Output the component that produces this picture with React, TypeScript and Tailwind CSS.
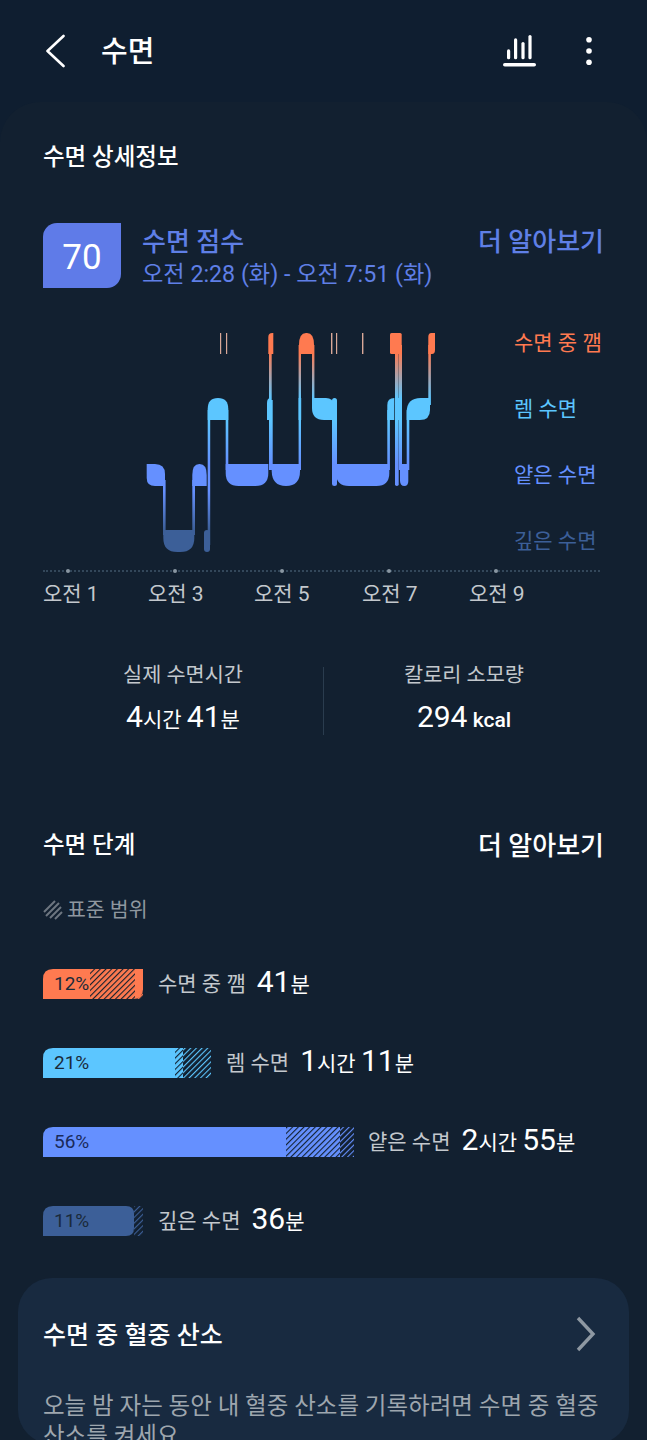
import type { ReactNode } from "react";

const FONT = "font-['Roboto','Noto_Sans_CJK_KR',sans-serif]";

// one hatch pattern per bar colour
function Hatch({ id, stroke }: { id: string; stroke: string }) {
  return (
    <pattern id={id} width="4" height="4" patternUnits="userSpaceOnUse" patternTransform="rotate(45)">
      <rect x="0" y="0" width="1.1" height="4" fill={stroke} />
    </pattern>
  );
}

function StageBar({
  width,
  color,
  hatchStart,
  hatchSolidEnd,
  id,
  label,
  labelColor,
  rounded,
}: {
  width: number;
  color: string;
  hatchStart: number;
  hatchSolidEnd: number;
  id: string;
  label: string;
  labelColor: string;
  rounded: string;
}) {
  return (
    <div className="relative h-[30px] shrink-0" style={{ width }}>
      <svg width={width} height={30} className="absolute inset-0">
        <defs>
          <Hatch id={id} stroke="#12202f" />
          <Hatch id={id + "-o"} stroke={color} />
        </defs>
        <path d={rounded} fill={color} />
        <rect x={hatchStart} y={0} width={hatchSolidEnd - hatchStart} height={30} fill={`url(#${id})`} />
        {hatchSolidEnd < width && (
          <rect x={hatchSolidEnd} y={0} width={width - hatchSolidEnd} height={30} fill={`url(#${id}-o)`} />
        )}
      </svg>
      <span className={`absolute left-[11px] top-[4px] text-[19px] leading-[22px] ${labelColor}`}>{label}</span>
    </div>
  );
}

function StageRow({ bar, name, children, nameGap }: { bar: ReactNode; name: string; children: ReactNode; nameGap: string }) {
  return (
    <div className="flex items-center h-[30px]">
      {bar}
      <span className={`pt-[1px] text-[21px] text-[#c3c8cd] whitespace-nowrap ${nameGap}`}>{name}</span>
      <span className="ml-[11px] text-white text-[21px] whitespace-nowrap">{children}</span>
    </div>
  );
}

function Big({ children }: { children: ReactNode }) {
  return <span className="text-[30px] leading-none">{children}</span>;
}

const ORANGE = "#ff7a50";
const SKY = "#5cc6ff";
const BLUE = "#6590ff";
const DEEP = "#3c5f98";

function SleepChart() {
  return (
    <svg width="310" height="240" viewBox="130 320 310 240" className="block">
      <defs>
        <linearGradient id="tr" gradientUnits="userSpaceOnUse" x1="0" y1="333" x2="0" y2="552">
          <stop offset="0.09" stopColor={ORANGE} />
          <stop offset="0.3" stopColor={SKY} />
          <stop offset="0.4" stopColor={SKY} />
          <stop offset="0.6" stopColor={BLUE} />
          <stop offset="0.72" stopColor={BLUE} />
          <stop offset="0.9" stopColor={DEEP} />
        </linearGradient>
      </defs>

      {/* transitions */}
      <g fill="url(#tr)">
        <rect x="163" y="480" width="2.6" height="55" />
        <rect x="192.3" y="480" width="2.7" height="55" />
        <rect x="207.7" y="410" width="2.5" height="135" />
        <rect x="225.7" y="410" width="2.6" height="60" />
        <rect x="269" y="345" width="2.7" height="125" />
        <rect x="270.7" y="400" width="2" height="70" />
        <rect x="298.6" y="345" width="2.4" height="125" />
        <rect x="312" y="345" width="2.4" height="60" />
        <rect x="332" y="398" width="5" height="88" rx="2.5" />
        <rect x="387.3" y="410" width="2.6" height="60" />
        <rect x="395" y="345" width="3.7" height="141" rx="1.8" />
        <rect x="399" y="345" width="3" height="125" />
        <rect x="406.7" y="410" width="2.6" height="60" />
        <rect x="428.3" y="345" width="2.6" height="60" />
      </g>

      {/* awake */}
      <g fill={ORANGE}>
        <path d="M268.3 354V337q0-4 4-4h1v21z" />
        <path d="M299 354V345q0-12 7-12h1q7 0 7 12v9z" />
        <rect x="390" y="333" width="11.7" height="21" rx="1.5" />
        <path d="M428.3 354V337q0-4 3-4h3.7v17q0 4-3 4z" />
      </g>
      <g fill="#d9a898">
        <rect x="220" y="333" width="1.2" height="21" />
        <rect x="226" y="333" width="1.2" height="21" />
        <rect x="331" y="333" width="1.4" height="21" />
        <rect x="336" y="333" width="1.2" height="21" />
        <rect x="362" y="333" width="1.4" height="21" />
      </g>

      {/* rem */}
      <g fill={SKY}>
        <path d="M207.7 420V409q0-11 10.3-11t10.3 11v11z" />
        <path d="M267 420v-17q0-5 3.7-5v22z" />
        <rect x="298.6" y="398" width="2.6" height="22" />
        <path d="M312 398h14q7 0 8 7v15h-10q-12 0-12-12z" />
        <path d="M387.3 420v-15q0-7 7-7v22z" />
        <rect x="395" y="398" width="7" height="22" />
        <path d="M406.7 420v-8q0-14 14-14h9.3v12q0 10-10 10z" />
      </g>

      {/* light */}
      <g fill={BLUE}>
        <path d="M146.7 464h8.3q10 0 10 10v12h-10q-8.3 0-8.3-8z" />
        <path d="M192.3 486V475q0-11 7-11h.4q7 0 7 11v11z" />
        <path d="M225.7 464h42.6v9q0 13-13 13h-16.6q-13 0-13-13z" />
        <path d="M271.7 464h28.3v7q0 15-14 15t-14.3-15z" />
        <path d="M336 464h53.3v9q0 13-13 13h-27.3q-13 0-13-13z" />
        <path d="M400 464h8.3v17q0 5-4 5t-4.3-5z" />
      </g>

      {/* deep */}
      <g fill={DEEP}>
        <path d="M163.3 530h31v8q0 14-14 14h-3q-14 0-14-14z" />
        <rect x="204" y="530" width="6" height="22" rx="3" />
      </g>
    </svg>
  );
}

export default function App() {
  return (
    <div className={`relative w-[647px] h-[1440px] overflow-hidden bg-[#0f1e30] ${FONT}`}>
      {/* header */}
      <header className="h-[102px] flex items-center pl-[46px] pr-[54px]">
        <svg width="20" height="34" viewBox="0 0 20 34" fill="none" stroke="#ffffff" strokeWidth="2.6" strokeLinecap="round" strokeLinejoin="round">
          <path d="M17.5 2 1.5 17l16 15" />
        </svg>
        <h1 className="ml-[35px] pt-[3px] text-[29px] font-medium text-white leading-none">수면</h1>
        <div className="ml-auto flex items-center gap-[48px]">
          <svg width="34" height="34" viewBox="0 0 34 34" fill="#ffffff">
            <rect x="4" y="15.3" width="3.2" height="10" rx="1.6" />
            <rect x="11" y="4.3" width="3.2" height="21" rx="1.6" />
            <rect x="18.4" y="8" width="3.2" height="17.3" rx="1.6" />
            <rect x="25.4" y="1" width="3.2" height="24.3" rx="1.6" />
            <rect x="0" y="29" width="33" height="3.6" rx="1.8" />
          </svg>
          <svg width="8" height="32" viewBox="0 0 8 32" fill="#ffffff">
            <circle cx="4" cy="4.8" r="2.8" />
            <circle cx="4" cy="16" r="2.8" />
            <circle cx="4" cy="27.2" r="2.8" />
          </svg>
        </div>
      </header>

      {/* main panel */}
      <main className="bg-[#122030] rounded-t-[40px] h-[1338px]">
        <h2 className="pl-[43px] pt-[41px] text-[23.5px] leading-[28px] font-medium text-white">수면 상세정보</h2>

        <section className="flex mt-[52px] pl-[43px] pr-[43px]">
          <div className="w-[78px] h-[65px] pt-[6px] bg-[#5f7be8] rounded-tl-[14px] rounded-br-[14px] flex items-center justify-center text-white text-[35px]">
            70
          </div>
          <div className="ml-[21px] pt-[3px]">
            <div className="text-[26px] leading-[32px] font-medium text-[#5f7fe6]">수면 점수</div>
            <div className="text-[23.2px] leading-[32px] text-[#5f7fe6] whitespace-nowrap">오전 2:28 (화) - 오전 7:51 (화)</div>
          </div>
          <div className="ml-auto pt-[3px] text-[26px] leading-[32px] font-medium text-[#5f7fe6]">더 알아보기</div>
        </section>

        {/* chart */}
        <section className="relative h-[272px] mt-[30px]">
          <div className="absolute left-[130px] top-0">
            <SleepChart />
          </div>
          <div className="absolute left-[514px] top-[8px] flex flex-col gap-[36px] text-[21px] leading-[30px] whitespace-nowrap">
            <span className="text-[#ff7a50]">수면 중 깸</span>
            <span className="text-[#5cc6ff]">렘 수면</span>
            <span className="text-[#6590ff]">얕은 수면</span>
            <span className="text-[#3c5f98]">깊은 수면</span>
          </div>
          <div className="absolute left-[43px] right-[47px] top-[250px] border-t-2 border-dotted border-[#33475a]" />
          <div className="absolute left-[66px] top-[249px] flex gap-[103px]">
            <span className="size-1 rounded-full bg-[#8a96a2]" />
            <span className="size-1 rounded-full bg-[#8a96a2]" />
            <span className="size-1 rounded-full bg-[#8a96a2]" />
            <span className="size-1 rounded-full bg-[#8a96a2]" />
            <span className="size-1 rounded-full bg-[#8a96a2]" />
          </div>
          <div className="absolute left-[43px] top-[259px] text-[21px] leading-[30px] text-[#c3c8cd] flex whitespace-nowrap">
            <span className="w-[105px]">오전 1</span>
            <span className="w-[106px]">오전 3</span>
            <span className="w-[108px]">오전 5</span>
            <span className="w-[107px]">오전 7</span>
            <span>오전 9</span>
          </div>
        </section>

        {/* totals */}
        <section className="flex mt-[75px] h-[68px] px-[43px]">
          <div className="w-[280px] text-center">
            <div className="-mt-[5px] text-[20.8px] leading-[26px] text-[#c3c8cd]">실제 수면시간</div>
            <div className="mt-[13px] text-white text-[21px] leading-[38px]">
              <Big>4</Big>시간 <Big>41</Big>분
            </div>
          </div>
          <div className="w-px bg-[#2a3c4e]" />
          <div className="flex-1 text-center">
            <div className="-mt-[5px] text-[20.8px] leading-[26px] text-[#c3c8cd]">칼로리 소모량</div>
            <div className="mt-[13px] text-white text-[21px] leading-[38px]">
              <Big>294</Big> <span className="font-medium">kcal</span>
            </div>
          </div>
        </section>

        {/* stages */}
        <section className="mt-[95px] px-[43px]">
          <div className="flex items-center justify-between h-[32px]">
            <h2 className="text-[23.5px] font-medium text-white">수면 단계</h2>
            <span className="text-[26px] font-medium text-white">더 알아보기</span>
          </div>
          <div className="flex items-center mt-[33px] h-[30px] text-[20.5px] text-[#8f979f]">
            <svg width="20" height="20" viewBox="0 0 20 20" stroke="#6d7680" strokeWidth="2" className="mr-[4px]">
              <path d="M1 12 12 1M3 16 16 3M7 18 18 7M12 19 19 12" />
            </svg>
            표준 범위
          </div>

          <div className="mt-[44px] flex flex-col gap-[49px]">
            <StageRow
              nameGap="ml-[15px]"
              name="수면 중 깸"
              bar={
                <StageBar width={100} color={ORANGE} hatchStart={47} hatchSolidEnd={92} id="h1" label="12%" labelColor="text-[#1a2a3a]" rounded="M10 0H100V20Q100 30 90 30H0V10Q0 0 10 0Z" />
              }
            >
              <Big>41</Big>분
            </StageRow>
            <StageRow
              nameGap="ml-[15px]"
              name="렘 수면"
              bar={
                <StageBar width={168} color={SKY} hatchStart={132} hatchSolidEnd={140} id="h2" label="21%" labelColor="text-[#1a2a3a]" rounded="M10 0H140V30H0V10Q0 0 10 0Z" />
              }
            >
              <Big>1</Big>시간 <Big>11</Big>분
            </StageRow>
            <StageRow
              nameGap="ml-[14px]"
              name="얕은 수면"
              bar={
                <StageBar width={311} color={BLUE} hatchStart={243} hatchSolidEnd={297} id="h3" label="56%" labelColor="text-[#1a2a5a]" rounded="M10 0H297V30H0V10Q0 0 10 0Z" />
              }
            >
              <Big>2</Big>시간 <Big>55</Big>분
            </StageRow>
            <StageRow
              nameGap="ml-[15px]"
              name="깊은 수면"
              bar={
                <StageBar width={100} color={DEEP} hatchStart={91} hatchSolidEnd={91} id="h4" label="11%" labelColor="text-[#1a2a3a]" rounded="M10 0H83Q91 0 91 8V22Q91 30 83 30H0V10Q0 0 10 0Z" />
              }
            >
              <Big>36</Big>분
            </StageRow>
          </div>
        </section>

        {/* blood oxygen card */}
        <section className="mt-[42px] mx-[18px] bg-[#182a40] rounded-[34px] h-[166px] pt-[36px] px-[25px]">
          <div className="flex items-center justify-between h-[40px]">
            <h2 className="pt-[3px] text-[25px] font-medium text-white">수면 중 혈중 산소</h2>
            <svg width="22" height="36" viewBox="0 0 22 36" fill="none" stroke="#8e98a2" strokeWidth="3.4" className="mr-[7px]">
              <path d="M3 2 18 18 3 34" />
            </svg>
          </div>
          <p className="mt-[37px] text-[23.5px] leading-[30px] text-[#9ea6ae] break-keep">
            오늘 밤 자는 동안 내 혈중 산소를 기록하려면 수면 중 혈중 산소를 켜세요
          </p>
        </section>
      </main>
    </div>
  );
}
